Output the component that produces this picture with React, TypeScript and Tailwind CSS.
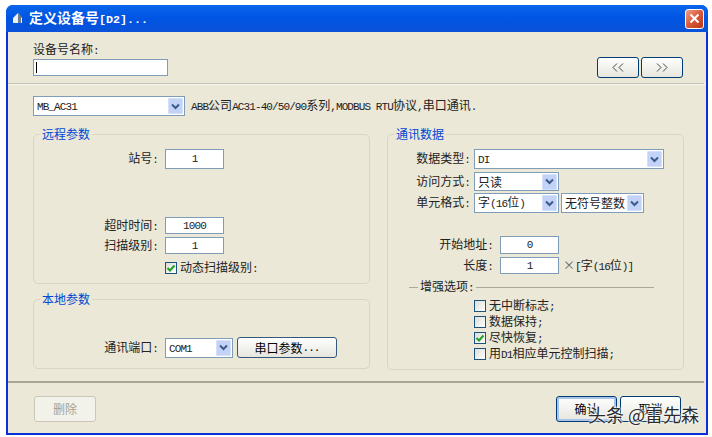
import React from "react";

const mono = "font-['Liberation_Mono',monospace] text-[11px] tracking-[-0.9px]";

// half-width latin, as the bitmap font of the dialog draws it
function L({ children }: { children: React.ReactNode }) {
  return <span className={mono}>{children}</span>;
}

function Chevron() {
  return (
    <svg width="9" height="7" viewBox="0 0 9 7" fill="none">
      <path d="M1 1.5l3.5 3.5L8 1.5" stroke="#3a5a8c" strokeWidth="2" />
    </svg>
  );
}

function Combo({ width, height = "h-[20px]", children }: { width: string; height?: string; children: React.ReactNode }) {
  return (
    <div className={`${width} ${height} flex items-center justify-between border border-[#7f9db9] bg-white pl-[3px] pr-px shrink-0`}>
      <span className="whitespace-nowrap leading-none">{children}</span>
      <span className="w-[15px] h-[16px] flex items-center justify-center rounded-[1px] bg-[#c3d3f8] border border-[#d5e0fa]">
        <Chevron />
      </span>
    </div>
  );
}

function Field({ width = "w-[59px]", height = "h-[17px]", children }: { width?: string; height?: string; children?: React.ReactNode }) {
  return (
    <div className={`${width} ${height} flex items-center justify-center border border-[#7f9db9] bg-white shrink-0 ${mono}`}>
      {children}
    </div>
  );
}

function Check({ checked, children }: { checked?: boolean; children: React.ReactNode }) {
  return (
    <div className="h-[12px] flex items-center gap-[3px] whitespace-nowrap">
      <span className="w-[12px] h-[12px] flex items-center justify-center border border-[#1c5180] bg-gradient-to-br from-[#dcdcd7] to-white shrink-0">
        {checked && (
          <svg width="10" height="10" viewBox="0 0 10 10" fill="none">
            <path d="M1.5 5l2.5 2.5L8.5 2.5" stroke="#21a121" strokeWidth="2" />
          </svg>
        )}
      </span>
      <span className="leading-none">{children}</span>
    </div>
  );
}

function XpButton({ className, children }: { className: string; children: React.ReactNode }) {
  return (
    <button className={`flex items-center justify-center rounded-[3px] border border-[#003c74] bg-gradient-to-b from-white to-[#e6e5dd] text-black shrink-0 ${className}`}>
      {children}
    </button>
  );
}

function Group({ title, className, children }: { title: string; className: string; children: React.ReactNode }) {
  return (
    <fieldset className={`rounded-[5px] border border-[#d8d5c4] ${className}`}>
      <legend className="ml-[6px] px-[2px] pb-[2px] leading-[15px] text-[#0046d5]">{title}</legend>
      {children}
    </fieldset>
  );
}

export default function App() {
  return (
    <div className="w-[712px] h-[437px] bg-white pt-[5px] pl-[6px] font-['Noto_Sans_CJK_SC',sans-serif] text-[12px] leading-[14px] text-[#222]">
      <div className="w-[702px] h-[430px] flex flex-col rounded-t-[7px] bg-[#0831d9] px-[2px] pb-[2px] overflow-hidden">
        {/* Title bar */}
        <div className="-mx-[2px] h-[27px] shrink-0 flex items-center justify-between bg-gradient-to-b from-[#0a66ea] via-[#0054e3] to-[#0a52d8] pl-[6px] pr-[4px]">
          <div className="flex items-center gap-[5px] text-white font-bold text-[14px]">
            <svg width="12" height="12" viewBox="0 0 12 12">
              <path d="M6 1L1 6v5h9V6z" fill="#eef0f2" />
              <path d="M6 1l5 5h-2v5H6z" fill="#6f7c8c" />
            </svg>
            <span className="leading-none whitespace-nowrap">
              定义设备号
              <span className="font-['Liberation_Mono',monospace] text-[11.7px]">[D2]...</span>
            </span>
          </div>
          <button className="w-[19px] h-[20px] flex items-center justify-center rounded-[3px] border border-white bg-gradient-to-br from-[#e9a08a] via-[#d9583a] to-[#bb3512]">
            <svg width="11" height="11" viewBox="0 0 11 11" fill="none">
              <path d="M1.5 1.5l8 8M9.5 1.5l-8 8" stroke="white" strokeWidth="2" />
            </svg>
          </button>
        </div>

        {/* Dialog body */}
        <div className="flex-1 flex flex-col bg-[#ebe8d8]">
          <div className="h-[52px] shrink-0 flex items-start justify-between pl-[25px] pr-[21px] mr-[2px] border-b border-[#c4c1b0]">
            <div className="pt-[10px]">
              <div className="h-[17px]">设备号名称<L>:</L></div>
              <div className="w-[135px] h-[17px] border border-[#7f9db9] bg-white pl-[2px] flex items-center">
                <span className="w-px h-[11px] bg-black" />
              </div>
            </div>
            <div className="flex gap-[2px] pt-[25px]">
              <XpButton className="w-[42px] h-[21px]">
                <svg width="12" height="9" viewBox="0 0 12 9" fill="none">
                  <path d="M5 .5L1 4.5l4 4M11 .5L7 4.5l4 4" stroke="#444" />
                </svg>
              </XpButton>
              <XpButton className="w-[42px] h-[21px]">
                <svg width="12" height="9" viewBox="0 0 12 9" fill="none">
                  <path d="M1 .5l4 4-4 4M7 .5l4 4-4 4" stroke="#444" />
                </svg>
              </XpButton>
            </div>
          </div>

          <div className="border-t border-[#f8f7f1] pt-[11px] pl-[25px] flex items-center gap-[6px]">
            <Combo width="w-[152px]"><L>MB_AC31</L></Combo>
            <span className="whitespace-nowrap leading-none">
              <L>ABB</L>公司<L>AC31-40/50/90</L>系列<L>,MODBUS RTU</L>协议<L>,</L>串口通讯<L>.</L>
            </span>
          </div>

          <div className="mt-[10px] ml-[25px] flex gap-[17px] items-start">
            <div className="w-[337px] flex flex-col gap-[7px]">
              <Group title="远程参数" className="h-[158px]">
                <div className="grid grid-cols-[124px_59px] gap-x-[7px] items-center pt-[6px]">
                  <span className="text-right">站号<L>:</L></span>
                  <Field height="h-[20px]">1</Field>
                  <span className="text-right mt-[48px]">超时时间<L>:</L></span>
                  <div className="mt-[48px]"><Field>1000</Field></div>
                  <span className="text-right mt-[3px]">扫描级别<L>:</L></span>
                  <div className="mt-[3px]"><Field>1</Field></div>
                  <div className="col-start-2 mt-[8px]">
                    <Check checked>动态扫描级别<L>:</L></Check>
                  </div>
                </div>
              </Group>
              <Group title="本地参数" className="h-[78px]">
                <div className="flex items-center pt-[29px] h-[50px]">
                  <span className="w-[124px] text-right">通讯端口<L>:</L></span>
                  <div className="ml-[7px] flex items-center gap-[4px]">
                    <Combo width="w-[68px]"><L>COM1</L></Combo>
                    <XpButton className="w-[100px] h-[21px] border-[#34587e]">串口参数<L>...</L></XpButton>
                  </div>
                </div>
              </Group>
            </div>

            <Group title="通讯数据" className="w-[297px] h-[244px]">
              <div className="pt-[6px] flex flex-col">
                <div className="flex items-center">
                  <span className="w-[82px] text-right">数据类型<L>:</L></span>
                  <div className="ml-[4px]"><Combo width="w-[190px]"><L>DI</L></Combo></div>
                </div>
                <div className="flex items-center mt-[3px]">
                  <span className="w-[82px] text-right">访问方式<L>:</L></span>
                  <div className="ml-[4px]"><Combo width="w-[85px]" height="h-[19px]">只读</Combo></div>
                </div>
                <div className="flex items-center mt-[2px]">
                  <span className="w-[82px] text-right">单元格式<L>:</L></span>
                  <div className="ml-[4px] flex gap-[2px]">
                    <Combo width="w-[85px]">字<L>(16</L>位<L>)</L></Combo>
                    <Combo width="w-[83px]">无符号整数</Combo>
                  </div>
                </div>
                <div className="flex items-center mt-[23px]">
                  <span className="w-[105px] text-right">开始地址<L>:</L></span>
                  <div className="ml-[7px]"><Field height="h-[18px]">0</Field></div>
                </div>
                <div className="flex items-center mt-[3px]">
                  <span className="w-[105px] text-right">长度<L>:</L></span>
                  <div className="ml-[7px]"><Field>1</Field></div>
                  <span className="ml-[4px] whitespace-nowrap leading-none"><span className="text-[#666]">×</span><L>[</L>字<L>(16</L>位<L>)]</L></span>
                </div>
                <div className="flex items-center mt-[5px] ml-[21px] w-[245px] h-[16px]">
                  <span className="w-[9px] border-t border-[#aca899]" />
                  <span className="px-[2px] whitespace-nowrap">增强选项<L>:</L></span>
                  <span className="flex-1 border-t border-[#aca899]" />
                </div>
                <div className="ml-[86px] mt-[5px] flex flex-col gap-[4px]">
                  <Check>无中断标志<L>;</L></Check>
                  <Check>数据保持<L>;</L></Check>
                  <Check checked>尽快恢复<L>;</L></Check>
                  <Check>用<L>D1</L>相应单元控制扫描<L>;</L></Check>
                </div>
              </div>
            </Group>
          </div>

          <div className="relative mt-[11px] mr-[2px] border-t-2 border-[#a9a695] h-[52px] flex items-start justify-between pl-[26px] pr-[23px] pt-[13px]">
            <button className="w-[62px] h-[26px] rounded-[3px] border border-[#cbc8b8] bg-[#f3f2ea] text-[#a5a393]">删除</button>
            <div className="flex gap-[3px]">
              <XpButton className="w-[61px] h-[26px] shadow-[inset_0_0_0_2px_#a9c4ea]">确认</XpButton>
              <XpButton className="w-[61px] h-[26px]">取消</XpButton>
            </div>
            <span className="absolute left-[580px] top-[19px] whitespace-nowrap text-[18px] leading-[24px] text-[#2b2b2b] [text-shadow:0_0_2px_white,0_0_2px_white,0_0_3px_white]">
              头条 @雷先森
            </span>
          </div>
        </div>
      </div>
    </div>
  );
}
